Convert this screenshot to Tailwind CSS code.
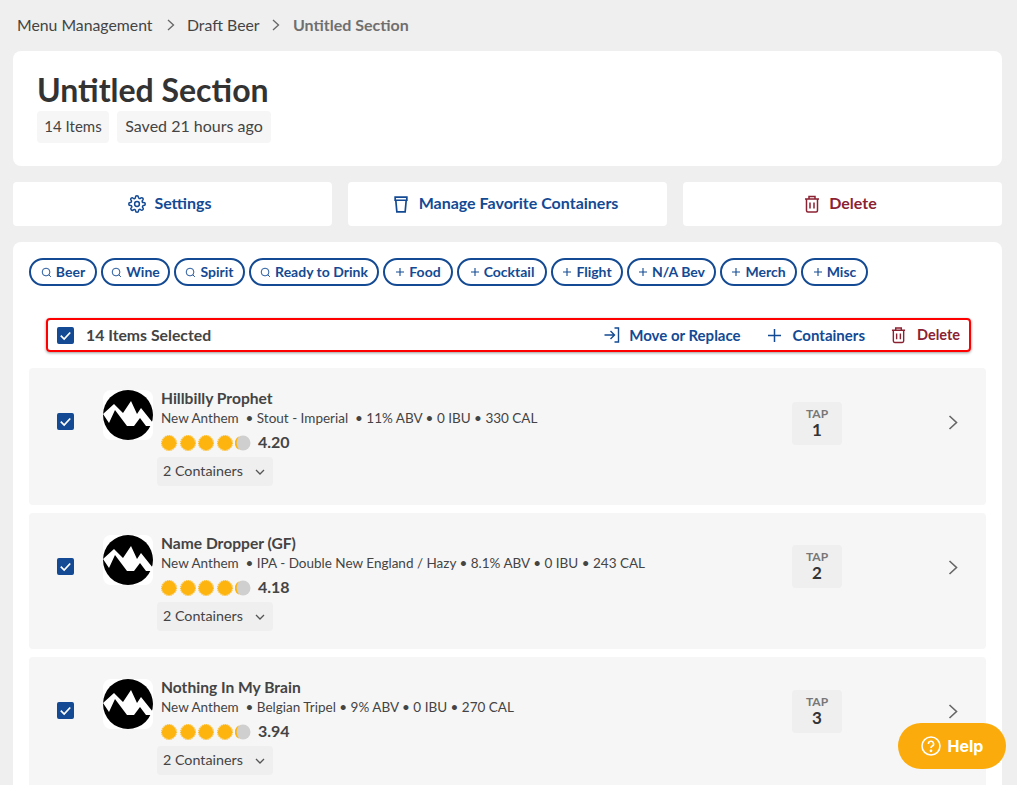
<!DOCTYPE html>
<html><head><meta charset="utf-8"><script src="https://cdn.jsdelivr.net/npm/@tailwindcss/browser@4"></script></head>
<body class="m-0 h-[785px] w-[1017px] overflow-hidden bg-[#efefef] font-['Lato','Open_Sans',sans-serif] text-[#333]">
<svg class="hidden"><defs>
<symbol id="dot" viewBox="0 0 16 16"><circle cx="8" cy="8" r="7.2" fill="#fdb40f"/><circle cx="8" cy="8" r="7.5" fill="none" stroke="#fdb40f" stroke-width="1" stroke-dasharray="1.4 .8"/></symbol>
<symbol id="part" viewBox="0 0 16 16"><circle cx="8" cy="8" r="7.5" fill="#cfcfcf"/><path d="M4 1.2A7.6 7.6 0 0 0 4 14.8 12 12 0 0 1 4 1.2Z" fill="#fdb40f"/></symbol>
<symbol id="logo" viewBox="0 0 50 50"><rect width="50" height="50" rx="8" fill="#fff"/><circle cx="25" cy="25" r="25" fill="#000"/><path d="M0 24 11 14 20 23 28 11 34 24 38 18 50 33 49 36 43 36 37 28 31 36 24 36 12 20 6 33Z" fill="#fff"/></symbol>
<symbol id="check" viewBox="0 0 18 18"><rect width="18" height="18" rx="2" fill="#134a93"/><path d="M4 9.2 7.6 12.8 14 5.8" fill="none" stroke="#fff" stroke-width="1.8"/></symbol>
<symbol id="trash" viewBox="0 0 16 18"><path d="M1 4H15M5 4V1.6H11V4M2.5 4V15.5A1.5 1.5 0 0 0 4 17H12A1.5 1.5 0 0 0 13.5 15.5V4M6 7.5V13.5M10 7.5V13.5" fill="none" stroke="currentColor" stroke-width="1.5"/></symbol>
<symbol id="mag" viewBox="0 0 12 12"><circle cx="5.5" cy="5.5" r="4.2" fill="none" stroke="currentColor" stroke-width="1"/><path d="M8.5 8.5 10.8 10.8" stroke="currentColor" stroke-width="1"/></symbol>
<symbol id="plus" viewBox="0 0 10 10"><path d="M5 1V9M1 5H9" stroke="currentColor" stroke-width="1.1"/></symbol>
</defs></svg>

<nav class="flex h-[51px] items-center whitespace-nowrap pl-[17px] pb-[1px] text-[16px] text-[#444]">
<span class="w-[137px] shrink-0 text-[15.8px]">Menu Management</span>
<svg class="ml-[13px] h-[12px] w-[8px]" viewBox="0 0 8 12"><path d="M1 1 6.5 6 1 11" fill="none" stroke="#666" stroke-width="1.3"/></svg>
<span class="ml-[12px] w-[72px] shrink-0 text-[15.8px]">Draft Beer</span>
<svg class="ml-[13px] h-[12px] w-[8px]" viewBox="0 0 8 12"><path d="M1 1 6.5 6 1 11" fill="none" stroke="#666" stroke-width="1.3"/></svg>
<span class="ml-[13px] font-bold text-[#6f6f6f]">Untitled Section</span>
</nav>

<section class="ml-[13px] mr-[15px] h-[115px] rounded-lg bg-white pl-[24px] pt-[20px]">
<h1 class="text-[32px] font-bold leading-[38px] text-[#333]">Untitled Section</h1>
<div class="mt-[2px] flex gap-[8px] text-[#444]">
<span class="flex h-[32px] w-[72px] items-center justify-center rounded bg-[#f6f6f6] pb-[2px] text-[15px]">14 Items</span>
<span class="flex h-[32px] w-[154px] items-center justify-center rounded bg-[#f6f6f6] pb-[2px] text-[16px]">Saved 21 hours ago</span>
</div>
</section>

<div class="ml-[13px] mr-[15px] mt-[16px] grid grid-cols-3 gap-[16px] text-[16px] font-bold">
<button class="flex h-[44px] items-center justify-center gap-[8px] rounded bg-white pr-[5px] text-[#134a93]">
<svg class="h-[18px] w-[18px]" viewBox="0 0 24 24" fill="none" stroke="currentColor" stroke-width="2"><circle cx="12" cy="12" r="3.2"/><path d="M19.4 15a1.65 1.65 0 0 0 .33 1.82l.06.06a2 2 0 1 1-2.83 2.83l-.06-.06a1.65 1.65 0 0 0-2.82 1.17V21a2 2 0 1 1-4 0v-.09a1.65 1.65 0 0 0-2.82-1.12l-.06.06a2 2 0 1 1-2.83-2.83l.06-.06A1.65 1.65 0 0 0 3.09 14H3a2 2 0 1 1 0-4h.09a1.65 1.65 0 0 0 1.12-2.82l-.06-.06a2 2 0 1 1 2.83-2.83l.06.06A1.65 1.65 0 0 0 9.9 3.09V3a2 2 0 1 1 4 0v.09a1.65 1.65 0 0 0 2.82 1.12l.06-.06a2 2 0 1 1 2.83 2.83l-.06.06A1.65 1.65 0 0 0 20.91 10H21a2 2 0 1 1 0 4h-.09a1.65 1.65 0 0 0-1.51 1Z"/></svg><span class="pb-[2px]">Settings</span></button>
<button class="flex h-[44px] items-center justify-center gap-[11px] rounded bg-white pr-[3px] text-[#134a93]">
<svg class="h-[17px] w-[14px]" viewBox="0 0 13 16" fill="none" stroke="currentColor" stroke-width="1.6"><path d="M1 1H12V4H1ZM1.6 4 2.6 15H10.4L11.4 4"/></svg><span class="pb-[2px]">Manage Favorite Containers</span></button>
<button class="flex h-[44px] items-center justify-center gap-[9px] rounded bg-white pr-[4px] text-[#8b2232]">
<svg class="h-[18px] w-[16px]"><use href="#trash"/></svg><span class="pb-[2px]">Delete</span></button>
</div>

<main class="ml-[13px] mr-[15px] mt-[16px] h-[600px] rounded-t-lg bg-white px-[16px] pt-[16px]">
<div class="flex gap-[4px] text-[14px] font-bold text-[#134a93]">
<span class="flex h-[28px] w-[68px] items-center justify-center gap-[4px] rounded-full border-2 border-[#134a93] pb-[2px]"><svg class="mt-[2px] h-[11px] w-[11px]"><use href="#mag"/></svg>Beer</span>
<span class="flex h-[28px] w-[69px] items-center justify-center gap-[4px] rounded-full border-2 border-[#134a93] pb-[2px]"><svg class="mt-[2px] h-[11px] w-[11px]"><use href="#mag"/></svg>Wine</span>
<span class="flex h-[28px] w-[71px] items-center justify-center gap-[4px] rounded-full border-2 border-[#134a93] pb-[2px]"><svg class="mt-[2px] h-[11px] w-[11px]"><use href="#mag"/></svg>Spirit</span>
<span class="flex h-[28px] w-[130px] items-center justify-center gap-[4px] rounded-full border-2 border-[#134a93] pb-[2px]"><svg class="mt-[2px] h-[11px] w-[11px]"><use href="#mag"/></svg>Ready to Drink</span>
<span class="flex h-[28px] w-[70px] items-center justify-center gap-[4px] rounded-full border-2 border-[#134a93] pb-[2px]"><svg class="mt-[2px] h-[10px] w-[10px]"><use href="#plus"/></svg>Food</span>
<span class="flex h-[28px] w-[90px] items-center justify-center gap-[4px] rounded-full border-2 border-[#134a93] pb-[2px]"><svg class="mt-[2px] h-[10px] w-[10px]"><use href="#plus"/></svg>Cocktail</span>
<span class="flex h-[28px] w-[72px] items-center justify-center gap-[4px] rounded-full border-2 border-[#134a93] pb-[2px]"><svg class="mt-[2px] h-[10px] w-[10px]"><use href="#plus"/></svg>Flight</span>
<span class="flex h-[28px] w-[89px] items-center justify-center gap-[4px] rounded-full border-2 border-[#134a93] pb-[2px]"><svg class="mt-[2px] h-[10px] w-[10px]"><use href="#plus"/></svg>N/A Bev</span>
<span class="flex h-[28px] w-[77px] items-center justify-center gap-[4px] rounded-full border-2 border-[#134a93] pb-[2px]"><svg class="mt-[2px] h-[10px] w-[10px]"><use href="#plus"/></svg>Merch</span>
<span class="flex h-[28px] w-[67px] items-center justify-center gap-[4px] rounded-full border-2 border-[#134a93] pb-[2px]"><svg class="mt-[2px] h-[10px] w-[10px]"><use href="#plus"/></svg>Misc</span>
</div>

<div class="ml-[17px] mt-[32px] flex h-[34px] w-[925px] items-center rounded border-2 border-[#ff0000] pl-[9px] shadow-[0_1px_3px_rgba(0,0,0,0.4)]">
<svg class="h-[17px] w-[17px]"><use href="#check"/></svg>
<span class="ml-[12px] pb-[1px] text-[15.8px] font-bold text-[#444]">14 Items Selected</span>
<div class="ml-auto flex items-center pr-[9px] text-[15px] font-bold">
<svg class="h-[16px] w-[16px] text-[#134a93]" viewBox="0 0 16 16" fill="none" stroke="currentColor" stroke-width="1.4"><path d="M0.5 8H10M6.5 4 10.5 8 6.5 12M10.5 1H14.5V15H10.5"/></svg>
<span class="ml-[9px] text-[#134a93]">Move or Replace</span>
<svg class="ml-[27px] h-[13px] w-[13px] text-[#134a93]" viewBox="0 0 13 13"><path d="M6.5 0V13M0 6.5H13" stroke="currentColor" stroke-width="1.5"/></svg>
<span class="ml-[12px] text-[#134a93]">Containers</span>
<svg class="ml-[26px] h-[18px] w-[15px] text-[#8b2232]"><use href="#trash"/></svg>
<span class="ml-[11px] text-[14.5px] text-[#8b2232]">Delete</span>
</div>
</div>

<div class="mt-[16px] flex flex-col gap-[8px]">

<article class="flex h-[137px] items-start rounded bg-[#f6f6f6]">
<svg class="ml-[28px] mt-[45px] h-[17px] w-[17px] shrink-0"><use href="#check"/></svg>
<svg class="ml-[29px] mt-[22px] h-[50px] w-[50px] shrink-0"><use href="#logo"/></svg>
<div class="ml-[8px] w-[631px] pt-[20px]">
<h3 class="text-[15.6px] font-bold leading-[20px] text-[#444]">Hillbilly Prophet</h3>
<p class="text-[13.5px] leading-[21px] text-[#444]">New Anthem &nbsp;• Stout - Imperial &nbsp;• 11% ABV • 0 IBU • 330 CAL</p>
<div class="mt-[4px] flex h-[20px] items-center gap-[2.6px]"><svg class="h-[16px] w-[16px]"><use href="#dot"/></svg><svg class="h-[16px] w-[16px]"><use href="#dot"/></svg><svg class="h-[16px] w-[16px]"><use href="#dot"/></svg><svg class="h-[16px] w-[16px]"><use href="#dot"/></svg><svg class="h-[16px] w-[16px]"><use href="#part"/></svg><span class="ml-[4px] pb-[3px] text-[16px] font-bold text-[#444]">4.20</span></div>
<div class="-ml-[4px] mt-[4px] flex h-[29px] w-[116px] items-center gap-[12px] rounded bg-[#efefef] pl-[6px] text-[14.3px] text-[#444]"><span class="pb-[1px]">2 Containers</span><svg class="h-[6px] w-[10px]" viewBox="0 0 10 6"><path d="M1 1 5 5 9 1" fill="none" stroke="#555" stroke-width="1.3"/></svg></div>
</div>
<div class="mt-[34px] flex h-[43px] w-[50px] flex-col items-center justify-center rounded bg-[#efefef]"><span class="text-[12px] font-bold leading-[13px] text-[#777]">TAP</span><span class="text-[17px] font-bold leading-[20px] text-[#333]">1</span></div>
<svg class="ml-[106px] mt-[47px] h-[15px] w-[10px]" viewBox="0 0 10 15"><path d="M1.5 1 8.5 7.5 1.5 14" fill="none" stroke="#666" stroke-width="1.6"/></svg>
</article>

<article class="flex h-[136px] items-start rounded bg-[#f6f6f6]">
<svg class="ml-[28px] mt-[45px] h-[17px] w-[17px] shrink-0"><use href="#check"/></svg>
<svg class="ml-[29px] mt-[22px] h-[50px] w-[50px] shrink-0"><use href="#logo"/></svg>
<div class="ml-[8px] w-[631px] pt-[20px]">
<h3 class="text-[15.6px] font-bold leading-[20px] text-[#444]">Name Dropper (GF)</h3>
<p class="text-[13.5px] leading-[21px] text-[#444]">New Anthem &nbsp;• IPA - Double New England / Hazy • 8.1% ABV • 0 IBU • 243 CAL</p>
<div class="mt-[4px] flex h-[20px] items-center gap-[2.6px]"><svg class="h-[16px] w-[16px]"><use href="#dot"/></svg><svg class="h-[16px] w-[16px]"><use href="#dot"/></svg><svg class="h-[16px] w-[16px]"><use href="#dot"/></svg><svg class="h-[16px] w-[16px]"><use href="#dot"/></svg><svg class="h-[16px] w-[16px]"><use href="#part"/></svg><span class="ml-[4px] pb-[3px] text-[16px] font-bold text-[#444]">4.18</span></div>
<div class="-ml-[4px] mt-[4px] flex h-[29px] w-[116px] items-center gap-[12px] rounded bg-[#efefef] pl-[6px] text-[14.3px] text-[#444]"><span class="pb-[1px]">2 Containers</span><svg class="h-[6px] w-[10px]" viewBox="0 0 10 6"><path d="M1 1 5 5 9 1" fill="none" stroke="#555" stroke-width="1.3"/></svg></div>
</div>
<div class="mt-[32px] flex h-[43px] w-[50px] flex-col items-center justify-center rounded bg-[#efefef]"><span class="text-[12px] font-bold leading-[13px] text-[#777]">TAP</span><span class="text-[17px] font-bold leading-[20px] text-[#333]">2</span></div>
<svg class="ml-[106px] mt-[47px] h-[15px] w-[10px]" viewBox="0 0 10 15"><path d="M1.5 1 8.5 7.5 1.5 14" fill="none" stroke="#666" stroke-width="1.6"/></svg>
</article>

<article class="flex h-[136px] items-start rounded bg-[#f6f6f6]">
<svg class="ml-[28px] mt-[45px] h-[17px] w-[17px] shrink-0"><use href="#check"/></svg>
<svg class="ml-[29px] mt-[22px] h-[50px] w-[50px] shrink-0"><use href="#logo"/></svg>
<div class="ml-[8px] w-[631px] pt-[20px]">
<h3 class="text-[15.6px] font-bold leading-[20px] text-[#444]">Nothing In My Brain</h3>
<p class="text-[13.5px] leading-[21px] text-[#444]">New Anthem &nbsp;• Belgian Tripel • 9% ABV • 0 IBU • 270 CAL</p>
<div class="mt-[4px] flex h-[20px] items-center gap-[2.6px]"><svg class="h-[16px] w-[16px]"><use href="#dot"/></svg><svg class="h-[16px] w-[16px]"><use href="#dot"/></svg><svg class="h-[16px] w-[16px]"><use href="#dot"/></svg><svg class="h-[16px] w-[16px]"><use href="#dot"/></svg><svg class="h-[16px] w-[16px]"><use href="#part"/></svg><span class="ml-[4px] pb-[3px] text-[16px] font-bold text-[#444]">3.94</span></div>
<div class="-ml-[4px] mt-[4px] flex h-[29px] w-[116px] items-center gap-[12px] rounded bg-[#efefef] pl-[6px] text-[14.3px] text-[#444]"><span class="pb-[1px]">2 Containers</span><svg class="h-[6px] w-[10px]" viewBox="0 0 10 6"><path d="M1 1 5 5 9 1" fill="none" stroke="#555" stroke-width="1.3"/></svg></div>
</div>
<div class="mt-[33px] flex h-[43px] w-[50px] flex-col items-center justify-center rounded bg-[#efefef]"><span class="text-[12px] font-bold leading-[13px] text-[#777]">TAP</span><span class="text-[17px] font-bold leading-[20px] text-[#333]">3</span></div>
<svg class="ml-[106px] mt-[47px] h-[15px] w-[10px]" viewBox="0 0 10 15"><path d="M1.5 1 8.5 7.5 1.5 14" fill="none" stroke="#666" stroke-width="1.6"/></svg>
</article>
</div>
</main>

<button class="absolute left-[898px] top-[723px] flex h-[46px] w-[108px] items-center justify-center gap-[7px] rounded-full bg-[#fbab0b] font-['Inter',sans-serif] text-[16px] font-bold text-white">
<svg class="h-[20px] w-[20px]" viewBox="0 0 20 20" fill="none" stroke="#fff" stroke-width="1.6"><circle cx="10" cy="10" r="9"/><path d="M7.4 8A2.6 2.6 0 1 1 11 10.3C10.3 10.7 10 11 10 12"/><circle cx="10" cy="14.8" r=".6" fill="#fff"/></svg>Help</button>
</body></html>
